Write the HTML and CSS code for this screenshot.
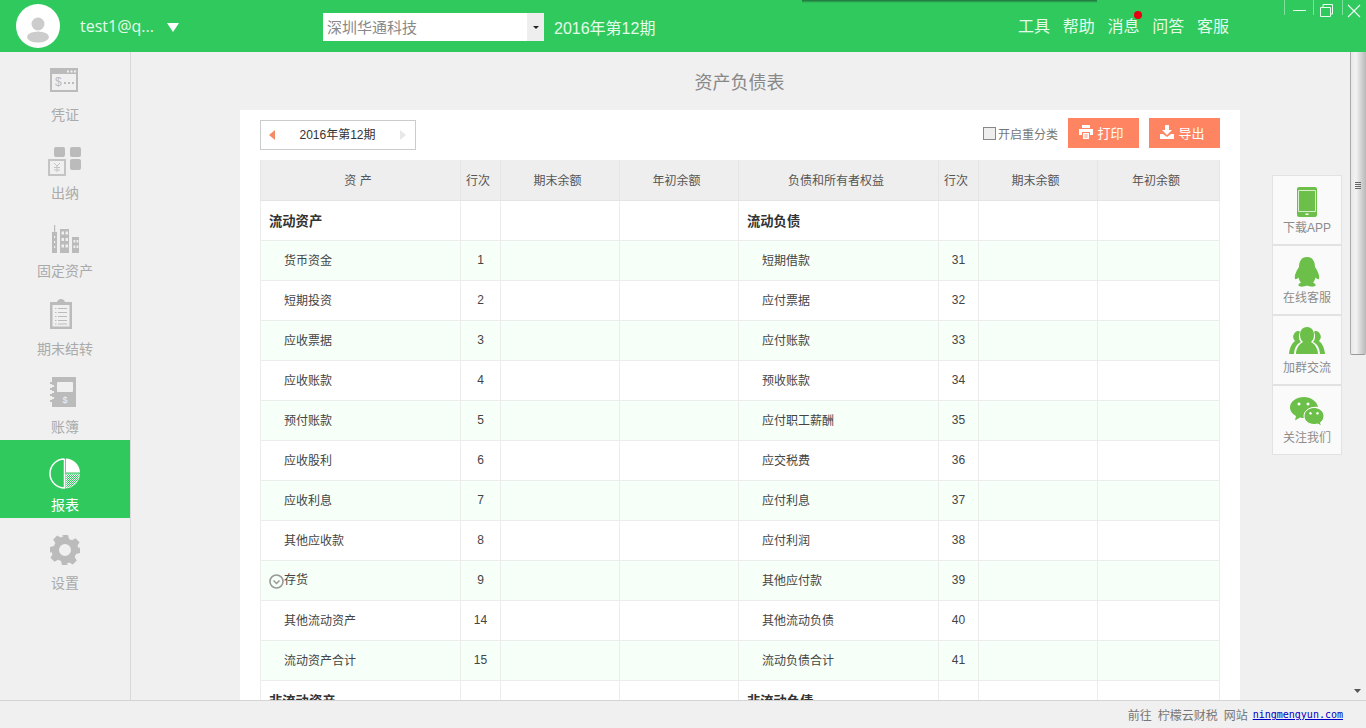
FILE: index.html
```html
<!DOCTYPE html>
<html lang="zh-CN">
<head>
<meta charset="utf-8">
<title>资产负债表</title>
<link rel="stylesheet" href="styles.css">
</head>
<body>
<div class="app">
  <header class="topbar">
    <div class="avatar">
      <svg viewBox="0 0 44 44" width="44" height="44"><circle cx="22" cy="22" r="22" fill="#fff"/><circle cx="22" cy="20" r="6.5" fill="#ccc"/><ellipse cx="22" cy="33" rx="11" ry="5.5" fill="#ccc"/></svg>
    </div>
    <div class="user">
      <span class="user-name">test1@q...</span>
      <svg class="user-caret" viewBox="0 0 12 9" width="12" height="9"><path d="M0 0H12L6 9Z" fill="#fff"/></svg>
    </div>
    <div class="company">
      <span class="company-name">深圳华通科技</span>
      <span class="company-btn"><svg viewBox="0 0 6 3" width="6" height="3"><path d="M0 0H6L3 3Z" fill="#222"/></svg></span>
    </div>
    <div class="period-label">2016年第12期</div>
    <nav class="topnav">
      <span>工具</span><span>帮助</span><span class="has-dot">消息<i class="dot"></i></span><span>问答</span><span>客服</span>
    </nav>
    <div class="winctl">
      <span class="winbtn win-min"><svg viewBox="0 0 14 14" width="14" height="14"><path d="M0 6.5H13" stroke="#eafbef"/></svg></span>
      <span class="winbtn win-max"><svg viewBox="0 0 14 14" width="14" height="14"><path d="M0.500 3.500H10.500V12.500H0.500ZM3 3V0.500H12.500V10H11" fill="none" stroke="#eafbef"/></svg></span>
      <span class="winbtn win-close"><svg viewBox="0 0 14 14" width="14" height="14"><path d="M1 1L13 13M13 1L1 13" stroke="#f2fdf5" stroke-width="1.100"/></svg></span>
    </div>
    <div class="top-shadow"></div>
  </header>

  <div class="middle">
    <aside class="sidebar">
      <div class="side-item">
        <svg viewBox="0 0 40 36" width="40" height="36"><g transform="translate(5 4)"><path d="M0 0H28V24H0ZM2 6V22H26V6Z" fill="#bbb" fill-rule="evenodd"/><path d="M17 2.500h2v2h-2zM20.500 2.500h2v2h-2zM24 2.500h2v2h-2z" fill="#f0f0f0"/><text x="5" y="18" class="svg-dollar">$</text><path d="M14 14h2v2h-2zM18 14h2v2h-2zM22 14h2v2h-2z" fill="#bbb"/></g></svg>
        <span>凭证</span>
      </div>
      <div class="side-item">
        <svg viewBox="0 0 40 36" width="40" height="36"><g transform="translate(3 4)"><rect x="6" y="1" width="11" height="10" rx="2" fill="#bbb"/><rect x="22" y="1" width="11" height="10" rx="2" fill="#bbb"/><rect x="22" y="13" width="11" height="11" rx="2" fill="#bbb"/><rect x="1" y="14" width="16" height="15" fill="none" stroke="#c4c4c4" stroke-width="2"/><path d="M6 17l3 3 3-3M9 20v6M6 21.500h6M6 24h6" fill="none" stroke="#c4c4c4"/></g></svg>
        <span>出纳</span>
      </div>
      <div class="side-item">
        <svg viewBox="0 0 40 36" width="40" height="36"><g transform="translate(7 5)"><path d="M2 0h1.200v7H5V28H0V7h2z" fill="#bbb"/><path d="M8 4H17V28H8Z" fill="#bbb"/><path d="M20 12H27V28H20Z" fill="#bbb"/><path d="M9.500 6.500h2.500v3H9.500zM13.500 6.500h2.500v3h-2.500zM9.500 13h2.500v3H9.500zM13.500 13h2.500v3h-2.500zM9.500 19.500h2.500v3H9.500zM13.500 19.500h2.500v3h-2.500zM21.500 15h1.800v2.500h-1.800zM24.500 15h1.800v2.500h-1.800zM21.500 20.500h1.800v2.500h-1.800zM24.500 20.500h1.800v2.500h-1.800zM2 11h1.200v2H2zM2 16h1.200v2H2zM2 21h1.200v2H2z" fill="#f0f0f0"/></g></svg>
        <span>固定资产</span>
      </div>
      <div class="side-item">
        <svg viewBox="0 0 40 36" width="40" height="36"><g transform="translate(5 1)"><path d="M0 3H7Q8 0 11 0T15 3H22V30H0Z" fill="#bbb"/><rect x="2.500" y="6" width="17" height="21.500" fill="#f0f0f0"/><path d="M8 9.500H17M8 13.500H17M8 17.500H17M8 21.500H17M8 25H17M5 9.500H6.500M5 13.500H6.500M5 17.500H6.500M5 21.500H6.500M5 25H6.500" stroke="#bbb"/></g></svg>
        <span>期末结转</span>
      </div>
      <div class="side-item">
        <svg viewBox="0 0 40 36" width="40" height="36"><g transform="translate(5 1)"><path d="M2 0H26V30H2Z" fill="#bbb"/><path d="M0 5h4v2H0zM0 11h4v2H0zM0 17h4v2H0zM0 23h4v2H0z" fill="#bbb"/><path d="M2 8h2v2H2zM2 14h2v2H2zM2 20h2v2H2z" fill="#f0f0f0"/><rect x="7" y="5" width="16" height="10" rx="1" fill="#f0f0f0"/><text x="12.500" y="26" class="svg-dollar light">$</text></g></svg>
        <span>账簿</span>
      </div>
      <div class="side-item active">
        <svg viewBox="0 0 40 36" width="40" height="36"><defs><pattern id="hatch" width="2" height="2" patternUnits="userSpaceOnUse"><path d="M0 2L2 0" stroke="#fff" stroke-width=".9"/></pattern></defs><g transform="translate(5 4)"><path d="M14.500 1A14.500 14.500 0 1 0 14.500 30V1" fill="none" stroke="#fff" stroke-width="1.500"/><path d="M16 0.500A14.500 14.500 0 0 1 30 14.500H16Z" fill="#fff"/><path d="M16 16H29.500A14 14 0 0 1 16 30Z" fill="url(#hatch)" stroke="#fff" stroke-width=".6"/></g></svg>
        <span>报表</span>
      </div>
      <div class="side-item">
        <svg viewBox="0 0 40 36" width="40" height="36"><g transform="translate(5 3)"><path fill="#bbb" fill-rule="evenodd" d="M12 0h6l1 4 3 1.300 3.500-2.100 4 4-2 3.500L28.800 13.500 30 12v6l-4 1-1.300 3 2.100 3.500-4 4-3.500-2L16.500 28.800 18 30h-6l-1-4-3-1.300-3.500 2.100-4-4 2-3.500L1.200 16.500 0 18v-6l4-1 1.300-3L3.200 4.500l4-4 3.500 2L13.500 1.200ZM15 9a6 6 0 1 0 0 12 6 6 0 0 0 0-12Z"/></g></svg>
        <span>设置</span>
      </div>
    </aside>

    <main class="main">
      <h1 class="page-title">资产负债表</h1>
      <section class="card">
        <div class="toolbar">
          <div class="period">
            <svg viewBox="0 0 6 10" width="6" height="10"><path d="M6 0V10L0 5Z" fill="#f58a66"/></svg>
            <span class="period-text">2016年第12期</span>
            <svg viewBox="0 0 6 10" width="6" height="10"><path d="M0 0V10L6 5Z" fill="#e8e8e8"/></svg>
          </div>
          <label class="reclass"><i class="check"></i>开启重分类</label>
          <button class="btn btn-print">
            <svg viewBox="0 0 14 14" width="14" height="14"><path d="M3 0H11V3H3ZM0 4H14V10H11V7H3V10H0ZM4 8H10V14H4Z" fill="#fff"/><path d="M5.500 10H8.500M5.500 12H8.500" stroke="#ff8562"/></svg>打印
          </button>
          <button class="btn btn-export">
            <svg viewBox="0 0 14 14" width="14" height="14"><path d="M5 0H9V5H12L7 10 2 5H5ZM0 9H3L7 12 11 9H14V14H0Z" fill="#fff"/></svg>导出
          </button>
        </div>
        <table class="sheet">
          <colgroup>
            <col class="c-name"><col class="c-no"><col class="c-amt"><col class="c-amt">
            <col class="c-name"><col class="c-no"><col class="c-amt"><col class="c-last">
          </colgroup>
          <thead>
            <tr><th>资 产</th><th>行次</th><th>期末余额</th><th>年初余额</th><th>负债和所有者权益</th><th>行次</th><th>期末余额</th><th>年初余额</th></tr>
          </thead>
          <tbody>
            <tr><td class="group">流动资产</td><td></td><td></td><td></td><td class="group">流动负债</td><td></td><td></td><td></td></tr>
            <tr class="alt"><td class="item">货币资金</td><td class="no">1</td><td></td><td></td><td class="item">短期借款</td><td class="no">31</td><td></td><td></td></tr>
            <tr><td class="item">短期投资</td><td class="no">2</td><td></td><td></td><td class="item">应付票据</td><td class="no">32</td><td></td><td></td></tr>
            <tr class="alt"><td class="item">应收票据</td><td class="no">3</td><td></td><td></td><td class="item">应付账款</td><td class="no">33</td><td></td><td></td></tr>
            <tr><td class="item">应收账款</td><td class="no">4</td><td></td><td></td><td class="item">预收账款</td><td class="no">34</td><td></td><td></td></tr>
            <tr class="alt"><td class="item">预付账款</td><td class="no">5</td><td></td><td></td><td class="item">应付职工薪酬</td><td class="no">35</td><td></td><td></td></tr>
            <tr><td class="item">应收股利</td><td class="no">6</td><td></td><td></td><td class="item">应交税费</td><td class="no">36</td><td></td><td></td></tr>
            <tr class="alt"><td class="item">应收利息</td><td class="no">7</td><td></td><td></td><td class="item">应付利息</td><td class="no">37</td><td></td><td></td></tr>
            <tr><td class="item">其他应收款</td><td class="no">8</td><td></td><td></td><td class="item">应付利润</td><td class="no">38</td><td></td><td></td></tr>
            <tr class="alt"><td class="item expandable"><svg class="expand" viewBox="0 0 15 15" width="15" height="15"><circle cx="7.500" cy="7.500" r="6.500" fill="none" stroke="#999" stroke-width="1.600"/><path d="M4.500 6.500L7.500 9.500 10.500 6.500" fill="none" stroke="#999" stroke-width="1.500"/></svg>存货</td><td class="no">9</td><td></td><td></td><td class="item">其他应付款</td><td class="no">39</td><td></td><td></td></tr>
            <tr><td class="item">其他流动资产</td><td class="no">14</td><td></td><td></td><td class="item">其他流动负债</td><td class="no">40</td><td></td><td></td></tr>
            <tr class="alt"><td class="item">流动资产合计</td><td class="no">15</td><td></td><td></td><td class="item">流动负债合计</td><td class="no">41</td><td></td><td></td></tr>
            <tr><td class="group">非流动资产</td><td></td><td></td><td></td><td class="group">非流动负债</td><td></td><td></td><td></td></tr>
          </tbody>
        </table>
      </section>
    </main>

    <div class="scrollbar">
      <div class="thumb"><i></i><i></i><i></i><i></i></div>
      <svg class="scroll-down" viewBox="0 0 7 4" width="7" height="4"><path d="M0 0H7L3.500 4Z" fill="#555"/></svg>
    </div>

    <aside class="quick">
      <div class="quick-item">
        <svg viewBox="0 0 20 30" width="20" height="30"><path fill="#6cc04a" d="M2 0H18Q20 0 20 2V28Q20 30 18 30H2Q0 30 0 28V2Q0 0 2 0Z"/><path d="M1.500 3.500H18.500V24.500H1.500Z" fill="#6cc04a" stroke="#d8efcf"/><rect x="8.500" y="26.500" width="3" height="1.500" fill="#fff"/></svg>
        <span>下载APP</span>
      </div>
      <div class="quick-item">
        <svg viewBox="0 0 26 30" width="26" height="30"><path fill="#6cc04a" d="M13 0C19 0 21 5 21 10C23 13 26 18 25 22C24 23 22 21 21.500 20.500C21 23 20 24.500 19 25.500C21 26.500 22 27.500 21.500 28.500C21 30 16 30 13 28.500C10 30 5 30 4.500 28.500C4 27.500 5 26.500 7 25.500C6 24.500 5 23 4.500 20.500C4 21 2 23 1 22C0 18 3 13 5 10C5 5 7 0 13 0Z"/></svg>
        <span>在线客服</span>
      </div>
      <div class="quick-item">
        <svg viewBox="0 0 36 28" width="36" height="28"><path fill="#6cc04a" d="M18 0C23 0 25 4 25 8C25 12 23 14 22 15C26 17 29 22 29 27H7C7 22 10 17 14 15C13 14 11 12 11 8C11 4 13 0 18 0Z"/><path fill="#6cc04a" d="M9 4C10 4 10.500 4.300 11 5C9 9 10 13 12 15C8 17 5.500 20 5 27H0C0.500 21 3 16 6 14C4 12 3.500 9 5 7C6 5 7.500 4 9 4ZM27 4C28.500 4 30 5 31 7C32.500 9 32 12 30 14C33 16 35.500 21 36 27H31C30.500 20 28 17 24 15C26 13 27 9 25 5C25.500 4.300 26 4 27 4Z"/></svg>
        <span>加群交流</span>
      </div>
      <div class="quick-item">
        <svg viewBox="0 0 34 30" width="34" height="30"><path fill="#6cc04a" d="M14 0C21 0 27 4.500 28 10C21 9 14 13 14 19C14 20 14.200 20.500 14.400 21C13 21 11 21 10 20.500L5 23.500L6 19C2 17 0 14 0 10.500C0 4.500 6.500 0 14 0Z"/><path fill="#6cc04a" stroke="#fff" d="M24 10.500C29.500 10.500 34 14.500 34 19C34 22 32.500 24 30.500 25.500L31.500 29L27.500 27C26.500 27.300 25 27.500 24 27.500C18.500 27.500 14 23.500 14 19C14 14.500 18.500 10.500 24 10.500Z"/><path fill="#fff" d="M9 5.500a1.500 1.500 0 1 0 0.010 0ZM18 5.500a1.500 1.500 0 1 0 0.010 0ZM20.500 15a1.300 1.300 0 1 0 0.010 0ZM27.500 15a1.300 1.300 0 1 0 0.010 0Z"/></svg>
        <span>关注我们</span>
      </div>
    </aside>
  </div>

  <footer class="footer">
    <span>前往</span><span>柠檬云财税</span><span>网站</span><a class="site-link" href="#">ningmengyun.com</a>
  </footer>
</div>
</body>
</html>
```
FILE: styles.css
```css
* { box-sizing: border-box; }
html, body { margin: 0; height: 100%; overflow: hidden; }
body {
  font-family: "Liberation Sans", "Noto Sans CJK SC", sans-serif;
  font-size: 12px;
  color: #444;
  background: #f0f0f0;
}
.app { display: flex; flex-direction: column; height: 728px; }

/* top bar */
.topbar {
  position: relative;
  z-index: 3;
  flex: 0 0 52px;
  height: 52px;
  display: flex;
  align-items: center;
  padding-left: 16px;
  background: #30c95e;
  color: #e4fbe9;
}
.avatar { flex: 0 0 44px; height: 44px; }
.avatar svg { display: block; }
.user {
  flex: 0 0 263px;
  display: flex;
  align-items: center;
  padding-left: 20px;
}
.user-name { font-family: "Open Sans", "Noto Sans CJK SC", sans-serif; font-size: 16px; width: 87px; white-space: nowrap; }
.user-caret { margin-top: 2px; }
.company {
  flex: 0 0 221px;
  height: 28px;
  margin-top: 2px;
  display: flex;
  align-items: center;
  justify-content: space-between;
  background: #fff;
  padding-left: 4px;
}
.company-name { font-size: 15px; color: #888; padding-bottom: 2px; }
.company-btn {
  width: 17px;
  height: 28px;
  display: flex;
  align-items: center;
  justify-content: center;
  background: #eee;
}
.period-label { margin-left: 10px; margin-top: 2px; font-size: 16px; white-space: nowrap; }
.topnav {
  margin-left: auto;
  margin-right: 137px;
  display: flex;
  gap: 12.75px;
  font-size: 16px;
  margin-top: -3px;
}
.has-dot { position: relative; }
.dot {
  position: absolute;
  right: -3px;
  top: -2px;
  width: 8px;
  height: 8px;
  border-radius: 50%;
  background: #e60012;
}
.winctl { position: absolute; top: 0; right: 0; display: flex; }
.winbtn {
  width: 29px;
  height: 15px;
  border-left: 1px solid #7fdf9c;
  position: relative;
}
.win-close { width: 24px; }
.winbtn svg { position: absolute; top: 4px; }
.win-min svg { left: 8px; }
.win-max svg { left: 6px; }
.win-close svg { left: 4px; }
.top-shadow {
  position: absolute;
  left: 802px;
  top: 0;
  width: 295px;
  height: 3px;
  background: linear-gradient(to bottom, #1f6f3a, #30c95e);
}

/* body */
.middle { position: relative; flex: 1; min-height: 0; display: flex; overflow: hidden; }
.sidebar {
  flex: 0 0 131px;
  margin-top: -2px;
  border-right: 1px solid #d9d9d9;
  background: #f0f0f0;
  display: flex;
  flex-direction: column;
}
.side-item {
  flex: 0 0 78px;
  display: flex;
  flex-direction: column;
  align-items: center;
  justify-content: space-between;
  padding: 14px 0 4px;
  height: 78px;
  color: #aaa;
  font-size: 14px;
  line-height: 18px;
}
.side-item svg { display: block; }
.side-item.active { background: #30c95e; color: #fff; }
.svg-dollar { font-family: "Liberation Sans", sans-serif; font-size: 12px; fill: #bbb; }
.svg-dollar.light { fill: #f0f0f0; font-size: 9px; }

.main { flex: 1; min-width: 0; overflow: hidden; padding: 0 110px 0 109px; }
.page-title {
  margin: 0;
  height: 58px;
  padding-right: 1px;
  font-size: 18px;
  font-weight: 400;
  line-height: 62px;
  text-align: center;
  color: #888;
}
.card { background: #fff; padding: 0 20px; height: 700px; }
.toolbar { height: 50px; display: flex; align-items: center; }
.period {
  width: 156px;
  height: 30px;
  border: 1px solid #ccc;
  display: flex;
  align-items: center;
  justify-content: space-between;
  padding: 0 9px 0 8px;
  color: #333;
  font-size: 12px;
}
.period-text { padding-bottom: 3px; }
.reclass {
  margin-left: auto;
  margin-bottom: 3px;
  display: flex;
  align-items: center;
  color: #777;
  font-size: 12px;
}
.check {
  width: 13px;
  height: 13px;
  margin-right: 2px;
  background: #eee;
  border: 1px solid #888;
}
.btn {
  width: 71px;
  height: 30px;
  margin-left: 10px;
  margin-bottom: 4px;
  border: 0;
  background: #ff8562;
  color: #fff;
  font: inherit;
  font-size: 13px;
  display: flex;
  align-items: center;
  justify-content: center;
  gap: 4px;
}
.btn svg { margin-bottom: 1px; }
.btn-print { padding: 0 4px 2px 0; }
.btn-export { padding: 0 4px 2px 0; }
.sheet {
  width: 960px;
  border-collapse: collapse;
  table-layout: fixed;
  border-left: 1px solid #e8e8e8;
  border-right: 1px solid #e0e0e0;
}
.c-name { width: 200px; }
.c-no { width: 40px; }
.c-amt { width: 119px; }
.c-last { width: 122px; }
.sheet th, .sheet td {
  height: 40px;
  padding: 0 0 2px;
  border: 1px solid #ececec;
  font-size: 12px;
  font-weight: 400;
  text-align: center;
  color: #444;
}
.sheet th { background: #eee; border-color: #e4e4e4; border-top: 0; color: #555; padding: 0 5px 0 0; }
.sheet .alt td { background: #f6fff8; }
.sheet td.no { padding-bottom: 0; }
.sheet td.group { text-align: left; padding: 0 0 0 8px; font-size: 13.300px; font-weight: 700; color: #333; }
.sheet td.item { text-align: left; padding-left: 23px; }
.sheet td.expandable { padding-left: 8px; }
.expand { vertical-align: -5px; }

/* scrollbar */
.scrollbar {
  position: relative;
  flex: 0 0 16px;
  background: #f0f0f0;
}
.thumb {
  height: 303px;
  background: linear-gradient(to right, #e8e8e8, #f2f2f2 35%, #bdbdbd);
  border-left: 1px solid #aaa;
  border-right: 1px solid #bbb;
  border-bottom: 1px solid #999;
  border-radius: 0 0 2px 2px;
  display: flex;
  flex-direction: column;
  align-items: center;
  gap: 1px;
  padding-top: 130px;
}
.thumb i { display: block; width: 6px; height: 1px; background: #666; }
.scroll-down { position: absolute; left: 4px; bottom: 7px; }

/* quick links */
.quick {
  position: absolute;
  top: 123px;
  left: 1272px;
  width: 70px;
  display: flex;
  flex-direction: column;
}
.quick-item {
  height: 70px;
  background: #fafafa;
  border: 1px solid #e2e2e2;
  display: flex;
  flex-direction: column;
  align-items: center;
  justify-content: space-between;
  padding: 11px 0 9px;
  color: #8c8c8c;
  font-size: 12px;
  line-height: 14px;
}
.quick-item svg { display: block; }

/* footer */
.footer {
  flex: 0 0 28px;
  height: 28px;
  position: relative;
  z-index: 2;
  display: flex;
  align-items: center;
  justify-content: flex-end;
  gap: 6px;
  padding-right: 23px;
  background: #f0f0f0;
  border-top: 1px solid #d4d4d4;
  color: #777;
  font-size: 12px;
}
.site-link {
  font-family: "DejaVu Sans Mono", "Liberation Mono", monospace;
  font-size: 10px;
  color: #0000c8;
  margin-left: -1px;
}
```
